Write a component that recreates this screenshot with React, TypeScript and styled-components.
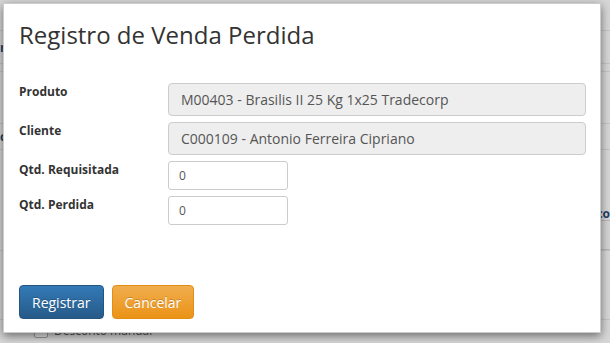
import React from "react";
import styled, { createGlobalStyle } from "styled-components";

const GlobalStyle = createGlobalStyle`
    html, body {
        margin: 0;
        padding: 0;
        width: 610px;
        height: 343px;
        overflow: hidden;
        font-family: "Open Sans", "Liberation Sans", sans-serif;
    }
`;

const Page = styled.div`
    position: relative;
    width: 610px;
    height: 343px;
    background: #d7d7d7;
    overflow: hidden;
`;

// the dimmed page behind the dialog
const Backdrop = styled.div`
    display: flex;
    flex-direction: column;
    height: 100%;
`;

const BackRow = styled.div<{ height: number; line?: boolean }>`
    height: ${props => props.height}px;
    border-bottom: ${props => (props.line === false ? "none" : "1px solid #c4c4c4")};
    display: flex;
    align-items: center;
    justify-content: space-between;
    font-size: 12px;
    font-weight: bold;
    color: #1f3f66;
`;

const BackInput = styled.div`
    width: 30px;
    height: 28px;
    margin-right: -16px;
    border: 1px solid #b8b8b8;
    border-radius: 3px;
    background: #d4d4d4;
`;

const BackCheck = styled.div`
    display: flex;
    align-items: center;
    gap: 6px;
    padding: 2px 0 0 34px;
    font-size: 12px;
    color: #555;
    white-space: nowrap;
`;

const CheckBox = styled.span`
    width: 12px;
    height: 12px;
    border: 1px solid #999;
    border-radius: 2px;
    background: #e4e4e4;
`;

const Modal = styled.div`
    position: absolute;
    left: 3px;
    top: 3px;
    width: 598px;
    height: 330px;
    box-sizing: border-box;
    background: #fff;
    border: 1px solid rgba(0, 0, 0, 0.2);
    box-shadow: 0 3px 9px rgba(0, 0, 0, 0.5);
    display: flex;
    flex-direction: column;
`;

const Header = styled.div`
    padding: 14px 15px 0 15px;
`;

const Title = styled.h4`
    margin: 0;
    font-size: 24px;
    font-weight: 400;
    color: #333;
    line-height: 34px;
`;

const Body = styled.div`
    padding: 31px 14px 0 15px;
    display: flex;
    flex-direction: column;
    gap: 6px;
    flex: 1;
`;

const Row = styled.div`
    display: grid;
    grid-template-columns: 149px 1fr;
    align-items: start;
`;

const Label = styled.label`
    font-size: 12px;
    font-weight: bold;
    color: #333;
`;

const ReadOnly = styled.div`
    height: 33px;
    box-sizing: border-box;
    padding: 0 12px;
    display: flex;
    align-items: center;
    background: #eee;
    border: 1px solid #ccc;
    border-radius: 4px;
    font-size: 14px;
    color: #555;
`;

const SmallInput = styled.div`
    width: 120px;
    height: 29px;
    box-sizing: border-box;
    padding: 0 10px;
    display: flex;
    align-items: center;
    background: #fff;
    border: 1px solid #ccc;
    border-radius: 3px;
    font-size: 12px;
    color: #555;
`;

const Footer = styled.div`
    padding: 0 15px 13px 15px;
    display: flex;
    gap: 8px;
`;

const Button = styled.button<{ variant: "primary" | "warning" }>`
    height: 34px;
    padding: 0 12px;
    font-family: "Open Sans", "Liberation Sans", sans-serif;
    font-size: 14px;
    color: #fff;
    border-radius: 4px;
    cursor: pointer;
    text-shadow: 0 -1px 0 rgba(0, 0, 0, 0.2);
    border: 1px solid ${props => (props.variant === "primary" ? "#245580" : "#e38d13")};
    background: ${props =>
        props.variant === "primary"
            ? "linear-gradient(to bottom, #337ab7 0%, #265a88 100%)"
            : "linear-gradient(to bottom, #f0ad4e 0%, #eb9316 100%)"};
`;

const fields = [
    { label: "Produto", value: "M00403 - Brasilis II 25 Kg 1x25 Tradecorp" },
    { label: "Cliente", value: "C000109 - Antonio Ferreira Cipriano" },
];

const quantities = ["Qtd. Requisitada", "Qtd. Perdida"];

export default function App() {
    return (
        <Page>
            <GlobalStyle />
            <Backdrop>
                <BackRow height={30} />
                <BackRow height={32}>n</BackRow>
                <BackRow height={7} />
                <BackRow height={51} />
                <BackRow height={25}>c</BackRow>
                <BackRow height={56} line={false} />
                <BackRow height={14} line={false}>
                    <span />
                    <span>co</span>
                </BackRow>
                <BackRow height={30}>
                    <span />
                    <BackInput />
                </BackRow>
                <BackRow height={68} />
                <BackCheck>
                    <CheckBox />
                    Desconto manual
                </BackCheck>
            </Backdrop>
            <Modal>
                <Header>
                    <Title>Registro de Venda Perdida</Title>
                </Header>
                <Body>
                    {fields.map(f => (
                        <Row key={f.label}>
                            <Label>{f.label}</Label>
                            <ReadOnly>{f.value}</ReadOnly>
                        </Row>
                    ))}
                    {quantities.map(q => (
                        <Row key={q}>
                            <Label>{q}</Label>
                            <SmallInput>0</SmallInput>
                        </Row>
                    ))}
                </Body>
                <Footer>
                    <Button variant="primary">Registrar</Button>
                    <Button variant="warning">Cancelar</Button>
                </Footer>
            </Modal>
        </Page>
    );
}
